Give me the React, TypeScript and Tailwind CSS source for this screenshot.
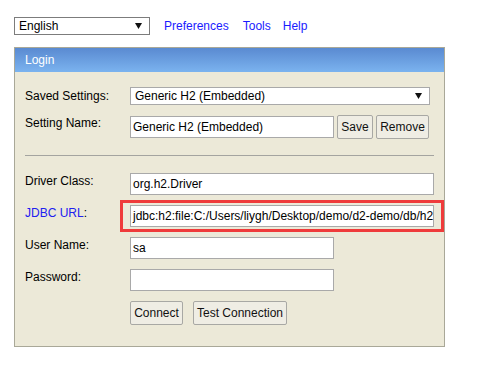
import React from "react";

// Tiny filled triangle used as the select arrow.
function Arrow() {
  return (
    <svg width="7" height="6" viewBox="0 0 7 6" className="shrink-0">
      <polygon points="0,0 7,0 3.5,6" fill="#111" />
    </svg>
  );
}

function FakeSelect({ value, className }: { value: string; className: string }) {
  return (
    <div
      className={`flex h-[18px] items-center justify-between bg-white pl-[4px] pr-[7px] ${className}`}
    >
      <span className="leading-[14px]">{value}</span>
      <Arrow />
    </div>
  );
}

function Field({ value = "", w }: { value?: string; w: string }) {
  return (
    <div
      className={`flex h-[22px] items-center border border-[#a9a9a9] bg-white pl-[2px] leading-[14px] whitespace-nowrap overflow-hidden ${w}`}
    >
      {value}
    </div>
  );
}

function Btn({ label, w }: { label: string; w: string }) {
  return (
    <div
      className={`flex h-[24px] items-center justify-center rounded-[2px] border border-[#a8a8a4] bg-[#efede4] leading-[14px] text-[#111] ${w}`}
    >
      {label}
    </div>
  );
}

function Label({ children }: { children: React.ReactNode }) {
  return <div className="w-[105px] shrink-0 pt-[1px] leading-[14px]">{children}</div>;
}

export default function App() {
  return (
    <div className="min-h-screen bg-white pl-[14px] pt-[17px] font-['Liberation_Sans',Arial,sans-serif] text-[12px] text-black">
      <div className="flex h-[18px] items-center">
        <FakeSelect value="English" className="w-[136px] border border-[#7c7c7c]" />
        <a className="ml-[14px] leading-[14px] text-[#1a1aff]">Preferences</a>
        <a className="ml-[14px] leading-[14px] text-[#1a1aff]">Tools</a>
        <a className="ml-[12px] leading-[14px] text-[#1a1aff]">Help</a>
      </div>

      <div className="mt-[12px] w-[431px] border border-[#a9a898] bg-[#ece9d8]">
        <div className="flex h-[24px] items-center bg-gradient-to-b from-[#5a8ad1] to-[#7bb3ef] pl-[10px] leading-[14px] text-white">
          Login
        </div>

        <div className="pb-[21px] pl-[10px] pt-[15px]">
          <div className="flex items-center">
            <div className="w-[105px] shrink-0 leading-[14px]">Saved Settings:</div>
            <FakeSelect
              value="Generic H2 (Embedded)"
              className="w-[300px] border border-[#a9a9a9]"
            />
          </div>

          <div className="mt-[10px] flex items-start">
            <div className="w-[105px] shrink-0 pt-[1px] leading-[14px]">Setting Name:</div>
            <div className="mt-[1px]">
              <Field value="Generic H2 (Embedded)" w="w-[204px]" />
            </div>
            <div className="ml-[3px] flex gap-[3px]">
              <Btn label="Save" w="w-[36px]" />
              <Btn label="Remove" w="w-[53px]" />
            </div>
          </div>

          <div className="mt-[16px] h-px w-[409px] bg-[#a4a4a0]" />

          <div className="mt-[17px] flex flex-col gap-[10px]">
            <div className="flex items-start">
              <Label>Driver Class:</Label>
              <Field value="org.h2.Driver" w="w-[304px]" />
            </div>
            <div className="flex items-start">
              <Label>
                <span className="text-[#2020f0]">JDBC URL</span>:
              </Label>
              <div className="relative">
                <Field
                  value="jdbc:h2:file:C:/Users/liygh/Desktop/demo/d2-demo/db/h2"
                  w="w-[304px]"
                />
                <div className="absolute -bottom-[5px] -left-[10px] -right-[10px] -top-[5px] border-[3px] border-[#ef3b3b]" />
              </div>
            </div>
            <div className="flex items-start">
              <Label>User Name:</Label>
              <Field value="sa" w="w-[204px]" />
            </div>
            <div className="flex items-start">
              <Label>Password:</Label>
              <Field w="w-[204px]" />
            </div>
            <div className="flex gap-[10px] pl-[105px]">
              <Btn label="Connect" w="w-[53px]" />
              <Btn label="Test Connection" w="w-[94px]" />
            </div>
          </div>
        </div>
      </div>
    </div>
  );
}
